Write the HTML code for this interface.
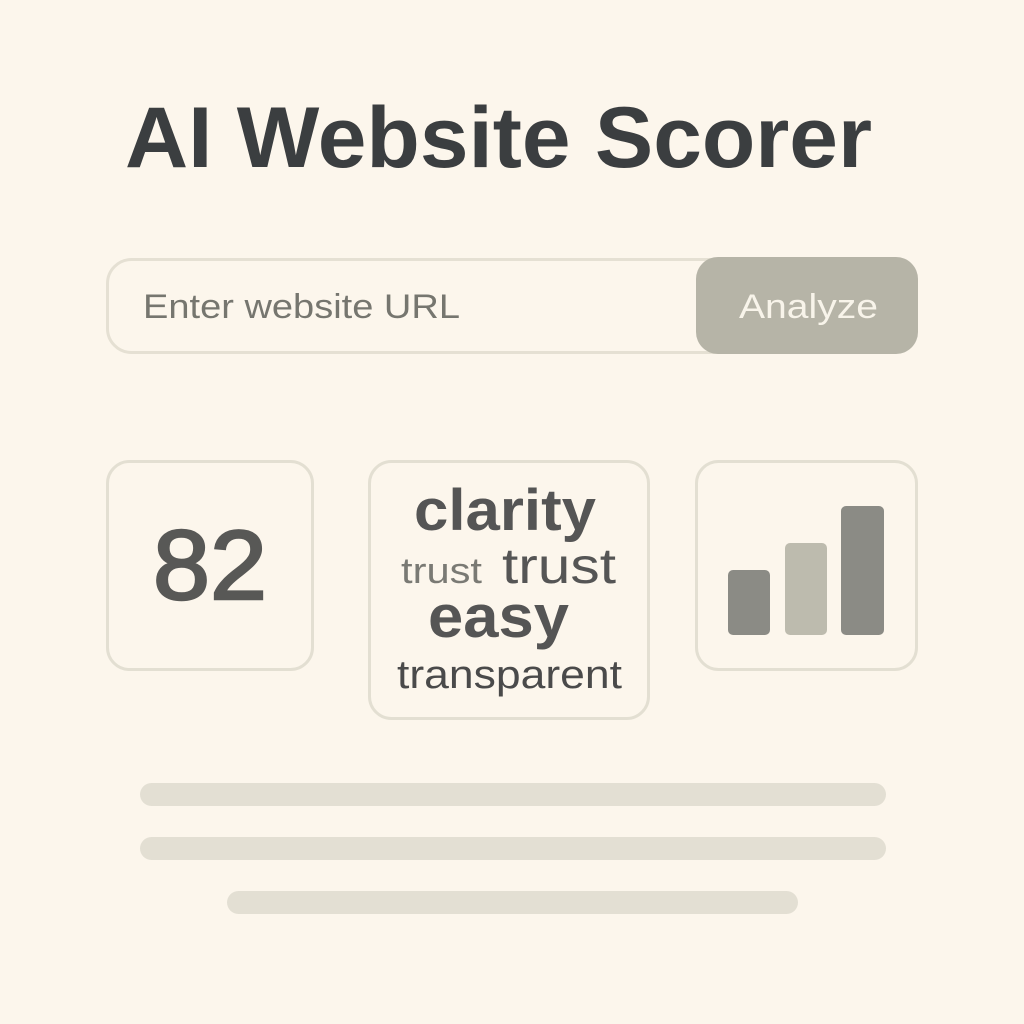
<!DOCTYPE html>
<html><head><meta charset="utf-8"><style>
html,body{margin:0;padding:0;background:#fcf6ec;}
svg{display:block}
text{font-family:"Liberation Sans",sans-serif}
</style></head><body>
<svg width="1024" height="1024" viewBox="0 0 1024 1024" xmlns="http://www.w3.org/2000/svg">
<rect width="1024" height="1024" fill="#fcf6ec"/>
<text x="125" y="167" font-size="86" font-weight="bold" fill="#3b3e40" textLength="747" lengthAdjust="spacingAndGlyphs">AI Website Scorer</text>

<rect x="107.5" y="259.5" width="809" height="93" rx="24" fill="#fcf6ec" stroke="#e5e0d3" stroke-width="3"/>
<rect x="696" y="257" width="222" height="97" rx="22" fill="#b6b4a7"/>
<text x="143" y="318" font-size="34" fill="#76766f" textLength="317" lengthAdjust="spacingAndGlyphs">Enter website URL</text>
<text x="739" y="318" font-size="34" fill="#f8f4ea" textLength="139" lengthAdjust="spacingAndGlyphs">Analyze</text>

<rect x="107.5" y="461.5" width="205" height="208" rx="22" fill="#fcf6ec" stroke="#e3dfd2" stroke-width="3"/>
<rect x="369.5" y="461.5" width="279" height="257" rx="22" fill="#fcf6ec" stroke="#e3dfd2" stroke-width="3"/>
<rect x="696.5" y="461.5" width="220" height="208" rx="22" fill="#fcf6ec" stroke="#e3dfd2" stroke-width="3"/>

<text x="153" y="599" font-size="98" fill="#585856" stroke="#585856" stroke-width="2.5" textLength="114" lengthAdjust="spacingAndGlyphs">82</text>

<text x="414" y="530" font-size="58" font-weight="bold" fill="#555555" textLength="182" lengthAdjust="spacingAndGlyphs">clarity</text>
<text x="401" y="583" font-size="36" fill="#7a7a74" textLength="81" lengthAdjust="spacingAndGlyphs">trust</text>
<text x="502" y="583" font-size="50" fill="#555555" textLength="114" lengthAdjust="spacingAndGlyphs">trust</text>
<text x="428" y="637" font-size="60" font-weight="bold" fill="#555555" textLength="141" lengthAdjust="spacingAndGlyphs">easy</text>
<text x="397" y="688" font-size="40" fill="#4a4a4a" textLength="225" lengthAdjust="spacingAndGlyphs">transparent</text>

<rect x="728" y="570" width="42" height="65" rx="5" fill="#8b8b85"/>
<rect x="785" y="543" width="42" height="92" rx="5" fill="#bdbbae"/>
<rect x="841" y="506" width="43" height="129" rx="5" fill="#8b8b85"/>

<rect x="140" y="783" width="746" height="23" rx="11.5" fill="#e3dfd3"/>
<rect x="140" y="837" width="746" height="23" rx="11.5" fill="#e3dfd3"/>
<rect x="227" y="891" width="571" height="23" rx="11.5" fill="#e3dfd3"/>
</svg>
</body></html>
